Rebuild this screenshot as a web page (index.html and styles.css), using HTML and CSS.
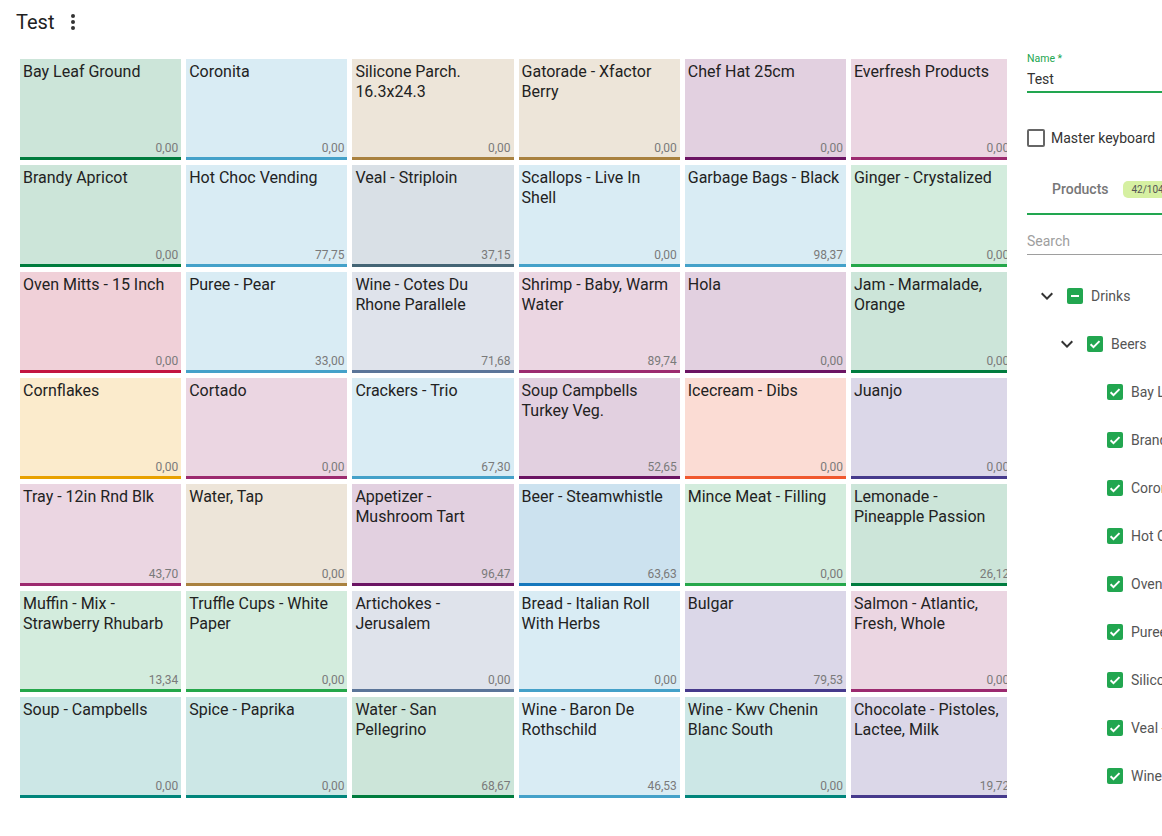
FILE: index.html
```html
<!DOCTYPE html>
<html lang="en">
<head>
<meta charset="utf-8">
<title>Test</title>
<link rel="stylesheet" href="styles.css">
</head>
<body>
<header class="topbar">
  <h1 class="title">Test</h1>
  <button class="icon-btn" aria-label="More">
    <svg viewBox="0 0 24 24" width="24" height="24"><circle cx="12" cy="6" r="2"/><circle cx="12" cy="12" r="2"/><circle cx="12" cy="18" r="2"/></svg>
  </button>
</header>

<main class="layout">
  <section class="board">
    <div class="grid">
      <div class="tile c-green"><span class="name">Bay Leaf Ground</span><span class="price">0,00</span></div>
      <div class="tile c-blue"><span class="name">Coronita</span><span class="price">0,00</span></div>
      <div class="tile c-brown"><span class="name">Silicone Parch. 16.3x24.3</span><span class="price">0,00</span></div>
      <div class="tile c-brown"><span class="name">Gatorade - Xfactor Berry</span><span class="price">0,00</span></div>
      <div class="tile c-plum"><span class="name">Chef Hat 25cm</span><span class="price">0,00</span></div>
      <div class="tile c-magenta"><span class="name">Everfresh Products</span><span class="price">0,00</span></div>

      <div class="tile c-green"><span class="name">Brandy Apricot</span><span class="price">0,00</span></div>
      <div class="tile c-blue"><span class="name">Hot Choc Vending</span><span class="price">77,75</span></div>
      <div class="tile c-slate"><span class="name">Veal - Striploin</span><span class="price">37,15</span></div>
      <div class="tile c-blue"><span class="name">Scallops - Live In Shell</span><span class="price">0,00</span></div>
      <div class="tile c-blue"><span class="name">Garbage Bags - Black</span><span class="price">98,37</span></div>
      <div class="tile c-lime"><span class="name">Ginger - Crystalized</span><span class="price">0,00</span></div>

      <div class="tile c-crimson"><span class="name">Oven Mitts - 15 Inch</span><span class="price">0,00</span></div>
      <div class="tile c-blue"><span class="name">Puree - Pear</span><span class="price">33,00</span></div>
      <div class="tile c-steel"><span class="name">Wine - Cotes Du Rhone Parallele</span><span class="price">71,68</span></div>
      <div class="tile c-magenta"><span class="name">Shrimp - Baby, Warm Water</span><span class="price">89,74</span></div>
      <div class="tile c-plum"><span class="name">Hola</span><span class="price">0,00</span></div>
      <div class="tile c-green"><span class="name">Jam - Marmalade, Orange</span><span class="price">0,00</span></div>

      <div class="tile c-amber"><span class="name">Cornflakes</span><span class="price">0,00</span></div>
      <div class="tile c-magenta"><span class="name">Cortado</span><span class="price">0,00</span></div>
      <div class="tile c-blue"><span class="name">Crackers - Trio</span><span class="price">67,30</span></div>
      <div class="tile c-plum"><span class="name">Soup Campbells Turkey Veg.</span><span class="price">52,65</span></div>
      <div class="tile c-coral"><span class="name">Icecream - Dibs</span><span class="price">0,00</span></div>
      <div class="tile c-indigo"><span class="name">Juanjo</span><span class="price">0,00</span></div>

      <div class="tile c-magenta"><span class="name">Tray - 12in Rnd Blk</span><span class="price">43,70</span></div>
      <div class="tile c-brown"><span class="name">Water, Tap</span><span class="price">0,00</span></div>
      <div class="tile c-plum"><span class="name">Appetizer - Mushroom Tart</span><span class="price">96,47</span></div>
      <div class="tile c-azure"><span class="name">Beer - Steamwhistle</span><span class="price">63,63</span></div>
      <div class="tile c-lime"><span class="name">Mince Meat - Filling</span><span class="price">0,00</span></div>
      <div class="tile c-green"><span class="name">Lemonade - Pineapple Passion</span><span class="price">26,12</span></div>

      <div class="tile c-lime"><span class="name">Muffin - Mix - Strawberry Rhubarb</span><span class="price">13,34</span></div>
      <div class="tile c-lime"><span class="name">Truffle Cups - White Paper</span><span class="price">0,00</span></div>
      <div class="tile c-steel"><span class="name">Artichokes - Jerusalem</span><span class="price">0,00</span></div>
      <div class="tile c-blue"><span class="name">Bread - Italian Roll With Herbs</span><span class="price">0,00</span></div>
      <div class="tile c-indigo"><span class="name">Bulgar</span><span class="price">79,53</span></div>
      <div class="tile c-magenta"><span class="name">Salmon - Atlantic, Fresh, Whole</span><span class="price">0,00</span></div>

      <div class="tile c-teal"><span class="name">Soup - Campbells</span><span class="price">0,00</span></div>
      <div class="tile c-teal"><span class="name">Spice - Paprika</span><span class="price">0,00</span></div>
      <div class="tile c-green"><span class="name">Water - San Pellegrino</span><span class="price">68,67</span></div>
      <div class="tile c-blue"><span class="name">Wine - Baron De Rothschild</span><span class="price">46,53</span></div>
      <div class="tile c-teal"><span class="name">Wine - Kwv Chenin Blanc South</span><span class="price">0,00</span></div>
      <div class="tile c-indigo"><span class="name">Chocolate - Pistoles, Lactee, Milk</span><span class="price">19,72</span></div>
    </div>
  </section>

  <aside class="panel">
    <label class="field">
      <span class="field-label">Name *</span>
      <span class="field-value">Test</span>
    </label>

    <div class="check-row">
      <span class="box"></span>
      <span>Master keyboard</span>
    </div>

    <div class="tabs">
      <div class="tab">
        <span class="tab-label">Products</span>
        <span class="badge">42/104</span>
      </div>
    </div>

    <div class="search">Search</div>

    <ul class="tree">
      <li class="node lvl0">
        <svg class="chev" viewBox="0 0 24 24" width="24" height="24"><path d="M16.59 8.59L12 13.17 7.41 8.59 6 10l6 6 6-6z"/></svg>
        <span class="cb"><svg viewBox="0 0 16 16" width="16" height="16"><path d="M4 8h8" /></svg></span>
        <span class="label">Drinks</span>
      </li>
      <li class="node lvl1">
        <svg class="chev" viewBox="0 0 24 24" width="24" height="24"><path d="M16.59 8.59L12 13.17 7.41 8.59 6 10l6 6 6-6z"/></svg>
        <span class="cb"><svg viewBox="0 0 16 16" width="16" height="16"><path d="M3.6 8.2l2.9 2.9 6-6" /></svg></span>
        <span class="label">Beers</span>
      </li>
      <li class="node lvl2"><span class="spacer"></span><span class="cb"><svg viewBox="0 0 16 16" width="16" height="16"><path d="M3.6 8.2l2.9 2.9 6-6" /></svg></span><span class="label">Bay Leaf Ground</span></li>
      <li class="node lvl2"><span class="spacer"></span><span class="cb"><svg viewBox="0 0 16 16" width="16" height="16"><path d="M3.6 8.2l2.9 2.9 6-6" /></svg></span><span class="label">Brandy Apricot</span></li>
      <li class="node lvl2"><span class="spacer"></span><span class="cb"><svg viewBox="0 0 16 16" width="16" height="16"><path d="M3.6 8.2l2.9 2.9 6-6" /></svg></span><span class="label">Coronita</span></li>
      <li class="node lvl2"><span class="spacer"></span><span class="cb"><svg viewBox="0 0 16 16" width="16" height="16"><path d="M3.6 8.2l2.9 2.9 6-6" /></svg></span><span class="label">Hot Choc Vending</span></li>
      <li class="node lvl2"><span class="spacer"></span><span class="cb"><svg viewBox="0 0 16 16" width="16" height="16"><path d="M3.6 8.2l2.9 2.9 6-6" /></svg></span><span class="label">Oven Mitts - 15 Inch</span></li>
      <li class="node lvl2"><span class="spacer"></span><span class="cb"><svg viewBox="0 0 16 16" width="16" height="16"><path d="M3.6 8.2l2.9 2.9 6-6" /></svg></span><span class="label">Puree - Pear</span></li>
      <li class="node lvl2"><span class="spacer"></span><span class="cb"><svg viewBox="0 0 16 16" width="16" height="16"><path d="M3.6 8.2l2.9 2.9 6-6" /></svg></span><span class="label">Silicone Parch. 16.3x24.3</span></li>
      <li class="node lvl2"><span class="spacer"></span><span class="cb"><svg viewBox="0 0 16 16" width="16" height="16"><path d="M3.6 8.2l2.9 2.9 6-6" /></svg></span><span class="label">Veal - Striploin</span></li>
      <li class="node lvl2"><span class="spacer"></span><span class="cb"><svg viewBox="0 0 16 16" width="16" height="16"><path d="M3.6 8.2l2.9 2.9 6-6" /></svg></span><span class="label">Wine - Cotes Du Rhone Parallele</span></li>
    </ul>
  </aside>
</main>
</body>
</html>
```

FILE: styles.css
```css
* { box-sizing: border-box; }

html, body {
  margin: 0;
  padding: 0;
  background: #fff;
  overflow: hidden;
}

body {
  font-family: Roboto, "Liberation Sans", Arial, sans-serif;
  color: rgba(0, 0, 0, 0.87);
  width: 1162px;
  height: 836px;
}

/* ---------- top bar ---------- */
.topbar {
  display: flex;
  align-items: center;
  height: 44px;
  padding-left: 16px;
  gap: 7px;
}

.title {
  margin: 0;
  font-size: 20px;
  font-weight: 400;
  line-height: 24px;
  color: #212121;
}

.icon-btn {
  border: 0;
  background: none;
  padding: 0;
  width: 24px;
  height: 24px;
  display: flex;
}

.icon-btn svg { fill: #333; }

/* ---------- main layout ---------- */
.layout {
  display: flex;
  padding-top: 8px;
}

.board {
  width: 987px;
  margin-left: 20px;
  padding-top: 7px;
  overflow: hidden;
  flex: none;
}

.grid {
  display: grid;
  grid-template-columns: repeat(6, 161.2px);
  grid-auto-rows: 101.33px;
  gap: 5px;
  width: 1002px;
}

.tile {
  display: flex;
  flex-direction: column;
  padding: 3px 3px 2px 3px;
  border-bottom: 3px solid;
  overflow: hidden;
}

.name {
  font-size: 16px;
  line-height: 20px;
  color: #222;
}

.price {
  margin-top: auto;
  align-self: flex-end;
  font-size: 12px;
  line-height: 14px;
  color: #7a7a7a;
}

/* tile colour themes: light fill with a strong bottom bar */
.c-green   { background: #cce5d9; border-color: #007c3e; }
.c-blue    { background: #d9ecf4; border-color: #44a1c9; }
.c-brown   { background: #ede5d9; border-color: #a9813f; }
.c-plum    { background: #e2d0e0; border-color: #6b1463; }
.c-magenta { background: #ebd6e2; border-color: #9c2a6f; }
.c-lime    { background: #d3ecdd; border-color: #25a74a; }
.c-slate   { background: #d9e0e6; border-color: #446575; }
.c-steel   { background: #dfe3eb; border-color: #5b7599; }
.c-crimson { background: #f0d0d8; border-color: #c21440; }
.c-amber   { background: #fbebcc; border-color: #e8a100; }
.c-coral   { background: #fbdcd4; border-color: #f0582e; }
.c-indigo  { background: #dbd7e8; border-color: #463a8c; }
.c-teal    { background: #cce7e6; border-color: #00857b; }
.c-azure   { background: #cce2ef; border-color: #1577bd; }

/* ---------- side panel ---------- */
.panel {
  flex: none;
  width: 300px;
  margin-left: 20px;
  font-size: 14px;
}

.field {
  display: flex;
  flex-direction: column;
  border-bottom: 2px solid #22a650;
  padding-bottom: 2px;
}

.field-label {
  font-size: 10.5px;
  line-height: 14px;
  color: #22a650;
}

.field-value {
  margin-top: 3px;
  line-height: 20px;
  color: #333;
}

.check-row {
  display: flex;
  align-items: center;
  gap: 6px;
  margin-top: 36px;
  height: 18px;
  color: #333;
}

.box {
  width: 18px;
  height: 18px;
  border: 2px solid #666;
  border-radius: 2px;
}

.tabs {
  margin-top: 18px;
  border-bottom: 2px solid #22a650;
}

.tab {
  display: flex;
  align-items: center;
  height: 48px;
  padding-left: 25px;
}

.tab-label {
  color: #777;
  font-weight: 500;
}

.badge {
  margin-left: 14px;
  margin-top: 1px;
  background: #d6f0a2;
  color: #555;
  font-size: 10px;
  line-height: 17px;
  height: 17px;
  padding: 0 9px;
  border-radius: 5px;
}

.search {
  margin-top: 16px;
  color: #9e9e9e;
  line-height: 20px;
  padding-bottom: 3px;
  border-bottom: 1px solid #9e9e9e;
}

.tree {
  list-style: none;
  margin: 17px 0 0;
  padding: 0 0 0 8px;
}

.node {
  display: flex;
  align-items: center;
  height: 48px;
  gap: 8px;
  color: #555;
  white-space: nowrap;
}

.lvl1 { padding-left: 20px; }
.lvl2 { padding-left: 40px; }

.chev { fill: #333; flex: none; }

.spacer { width: 24px; flex: none; }

.cb {
  width: 16px;
  height: 16px;
  border-radius: 2px;
  background: #22a650;
  flex: none;
  display: flex;
}

.cb svg {
  fill: none;
  stroke: #fff;
  stroke-width: 2;
}

.label { line-height: 20px; }
```
